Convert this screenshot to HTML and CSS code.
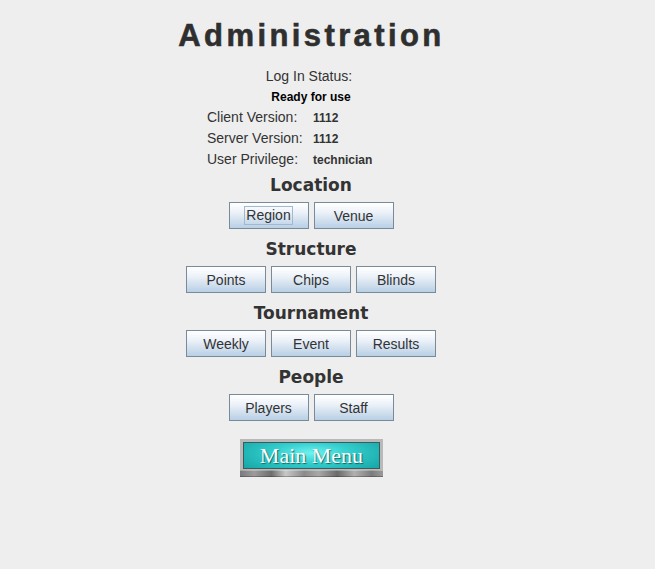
FILE: index.html
```html
<!DOCTYPE html>
<html>
<head>
<meta charset="utf-8">
<link rel="stylesheet" href="styles.css">
</head>
<body>
<div class="panel">
  <h1 class="title">Administration</h1>
  <div class="status-label">Log In Status:</div>
  <div class="status-value">Ready for use</div>
  <div class="info">
    <span class="info-label">Client Version:</span><span class="info-value">1112</span>
    <span class="info-label">Server Version:</span><span class="info-value">1112</span>
    <span class="info-label">User Privilege:</span><span class="info-value">technician</span>
  </div>

  <div class="section">
    <h2 class="heading">Location</h2>
    <div class="btn-row">
      <button class="btn btn-focus"><span class="focus-ring">Region</span></button>
      <button class="btn">Venue</button>
    </div>
  </div>
  <div class="section">
    <h2 class="heading">Structure</h2>
    <div class="btn-row">
      <button class="btn">Points</button>
      <button class="btn">Chips</button>
      <button class="btn">Blinds</button>
    </div>
  </div>
  <div class="section">
    <h2 class="heading">Tournament</h2>
    <div class="btn-row">
      <button class="btn">Weekly</button>
      <button class="btn">Event</button>
      <button class="btn">Results</button>
    </div>
  </div>
  <div class="section">
    <h2 class="heading">People</h2>
    <div class="btn-row">
      <button class="btn">Players</button>
      <button class="btn">Staff</button>
    </div>
  </div>

  <div class="main-menu">
    <div class="mm-frame">
      <div class="mm-face">Main Menu</div>
    </div>
    <div class="mm-bar"></div>
  </div>
</div>
</body>
</html>
```

FILE: styles.css
```css
html, body {
  margin: 0;
  padding: 0;
  background: #eeeeee;
}

body {
  font-family: "Liberation Sans", Arial, sans-serif;
  color: #333333;
}

.panel {
  width: 310px;
  margin-left: 156px;
  display: flex;
  flex-direction: column;
  align-items: center;
}

.title {
  margin: 18px 0 0 0;
  font-family: "Liberation Sans", Arial, sans-serif;
  font-weight: bold;
  font-size: 31px;
  line-height: 36px;
  letter-spacing: 3.4px;
  color: #2f2f2f;
  padding-left: 1px;
  -webkit-text-stroke: 0.6px #2f2f2f;
}

.status-label {
  margin-top: 14px;
  font-size: 14px;
  line-height: 16px;
  color: #333333;
  padding-right: 4px;
}

.status-value {
  margin-top: 5px;
  font-size: 12px;
  font-weight: bold;
  line-height: 16px;
  color: #000000;
}

.info {
  margin-top: 2px;
  align-self: flex-start;
  margin-left: 51px;
  display: grid;
  grid-template-columns: 106px auto;
  grid-template-rows: 21px 21px 21px;
  align-items: start;
}

.info-label {
  font-size: 14px;
  line-height: 21px;
  color: #333333;
}

.info-value {
  font-size: 12px;
  font-weight: bold;
  line-height: 21px;
  color: #333333;
  padding-top: 1px;
}

.section {
  display: flex;
  flex-direction: column;
  align-items: center;
  margin-top: 5px;
  margin-bottom: 5px;
}

.heading {
  margin: 0;
  font-family: "DejaVu Sans", Verdana, sans-serif;
  font-weight: bold;
  font-size: 17px;
  line-height: 20px;
  color: #333333;
}

.btn-row {
  margin-top: 7px;
  display: flex;
  gap: 5px;
}

.btn {
  width: 80px;
  height: 27px;
  box-sizing: border-box;
  margin: 0;
  padding: 0;
  border: 1px solid #7a8a99;
  border-radius: 0;
  background: linear-gradient(to bottom, #ffffff 0%, #eef3f9 35%, #b8cfe5 100%);
  font-family: "Liberation Sans", Arial, sans-serif;
  font-size: 14px;
  color: #333333;
  display: flex;
  align-items: center;
  justify-content: center;
}

.focus-ring {
  border: 1px solid #a3b8cc;
  padding: 0 1px;
  line-height: 17px;
}

.main-menu {
  margin-top: 13px;
  width: 143px;
  height: 38px;
  display: flex;
  flex-direction: column;
  padding-left: 1px;
}

.mm-frame {
  background: #b9b9b9;
  padding: 3px 3px 1px 3px;
  height: 27px;
}

.mm-face {
  height: 27px;
  box-sizing: border-box;
  border: 1px solid #3c5c5c;
  background: radial-gradient(ellipse 60% 90% at 50% 40%, #6ef2f0 0%, #34cfcf 45%, #1aa9a9 100%);
  font-family: "Liberation Serif", "Times New Roman", serif;
  font-size: 22px;
  line-height: 25px;
  color: #ffffff;
  text-align: center;
  text-shadow: 1px 1px 1px rgba(0, 60, 60, 0.7);
}

.mm-bar {
  height: 7px;
  background: linear-gradient(to right, #7a7a7a 0%, #9c9c9c 10%, #6e6e6e 22%, #c8c8c8 32%, #8a8a8a 45%, #a8a8a8 55%, #6a6a6a 68%, #b0b0b0 80%, #7c7c7c 92%, #9a9a9a 100%);
  box-shadow: inset 0 1px 0 rgba(255,255,255,0.3), inset 0 -1px 0 rgba(0,0,0,0.25);
}
```
